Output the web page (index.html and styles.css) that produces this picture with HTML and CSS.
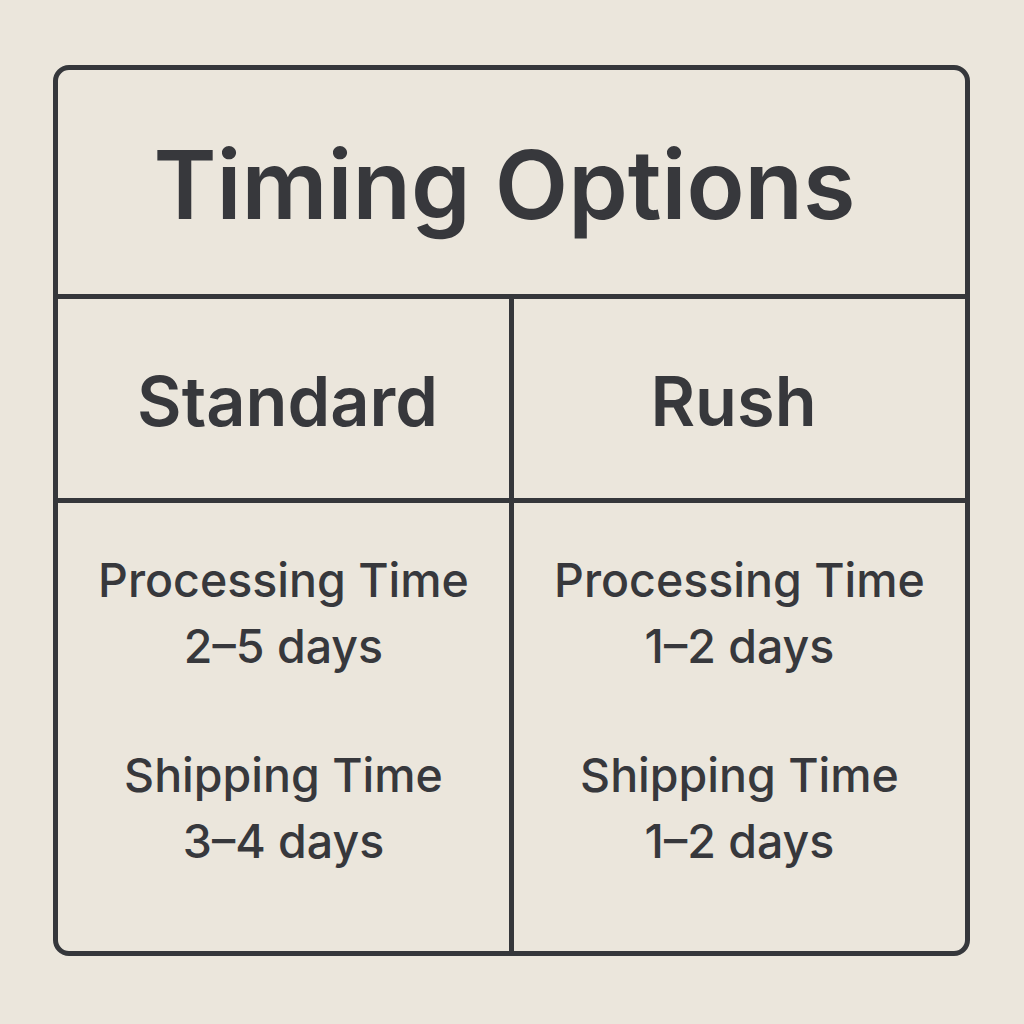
FILE: index.html
```html
<!DOCTYPE html>
<html lang="en">
<head>
<meta charset="utf-8">
<title>Timing Options</title>
<link rel="stylesheet" href="styles.css">
</head>
<body>
<main class="card">
  <h1 class="title">Timing Options</h1>
  <div class="cols">
    <div class="head head-left">Standard</div>
    <div class="head head-right">Rush</div>
    <div class="body body-left">
      <div class="item">
        <div class="label">Processing Time</div>
        <div class="value">2–5 days</div>
      </div>
      <div class="item">
        <div class="label">Shipping Time</div>
        <div class="value">3–4 days</div>
      </div>
    </div>
    <div class="body">
      <div class="item">
        <div class="label">Processing Time</div>
        <div class="value">1–2 days</div>
      </div>
      <div class="item">
        <div class="label">Shipping Time</div>
        <div class="value">1–2 days</div>
      </div>
    </div>
  </div>
</main>
</body>
</html>
```
FILE: styles.css
```css
html, body {
  margin: 0;
  padding: 0;
}
body {
  background: #ebe6dc;
  width: 1024px;
  height: 1024px;
  font-family: Inter, "Noto Sans", sans-serif;
  color: #37383c;
  padding-top: 65px;
  padding-left: 53px;
  box-sizing: border-box;
}
.card {
  width: 917px;
  height: 891px;
  box-sizing: border-box;
  border: 5px solid #35373b;
  border-radius: 16px;
  display: flex;
  flex-direction: column;
}
.title {
  margin: 0;
  height: 229px;
  box-sizing: border-box;
  border-bottom: 5px solid #35373b;
  display: flex;
  align-items: center;
  justify-content: center;
  font-size: 95.5px;
  font-weight: 600;
  padding-top: 4px;
  padding-right: 14px;
}
.cols {
  flex: 1;
  display: grid;
  grid-template-columns: 456px 1fr;
  grid-template-rows: 204px 1fr;
}
.head {
  border-bottom: 5px solid #35373b;
  display: flex;
  align-items: center;
  justify-content: center;
  font-size: 68.5px;
  font-weight: 600;
  padding-top: 6px;
}
.head-left {
  padding-left: 8px;
}
.head-right {
  padding-right: 12px;
}
.head-left, .body-left {
  border-right: 5px solid #35373b;
}
.body {
  display: flex;
  flex-direction: column;
  align-items: center;
  padding-top: 44px;
  gap: 63px;
}
.item {
  text-align: center;
  font-size: 46.5px;
  font-weight: 500;
  line-height: 66px;
}
```
